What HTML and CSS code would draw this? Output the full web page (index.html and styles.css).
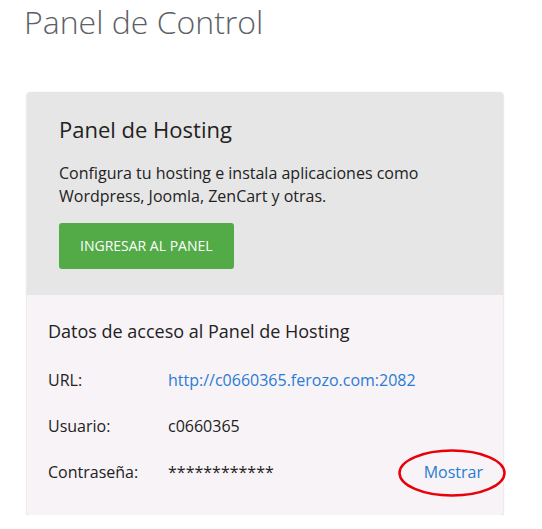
FILE: index.html
```html
<!DOCTYPE html>
<html lang="es">
<head>
    <meta charset="UTF-8">
    <title>Panel de Control</title>
    <link rel="stylesheet" href="styles.css">
</head>
<body>
    <h1 class="page-title">Panel de Control</h1>

    <div class="card">
        <div class="card-top">
            <h2>Panel de Hosting</h2>
            <p>Configura tu hosting e instala aplicaciones como Wordpress, Joomla, ZenCart y otras.</p>
            <a href="#" class="button">INGRESAR AL PANEL</a>
        </div>
        <div class="card-bottom">
            <h3>Datos de acceso al Panel de Hosting</h3>
            <div class="row">
                <span class="label">URL:</span>
                <a href="#" class="value link">http://c0660365.ferozo.com:2082</a>
            </div>
            <div class="row">
                <span class="label">Usuario:</span>
                <span class="value">c0660365</span>
            </div>
            <div class="row">
                <span class="label">Contraseña:</span>
                <span class="value">************</span>
                <a href="#" class="show link">
                    Mostrar
                    <svg class="circle" width="110" height="50" viewBox="0 0 110 50">
                        <ellipse cx="55" cy="25" rx="52.5" ry="22.5" fill="none" stroke="#e8000b" stroke-width="2.5"/>
                    </svg>
                </a>
            </div>
        </div>
    </div>
</body>
</html>
```

FILE: styles.css
```css
body {
    font-family: "Open Sans", "Liberation Sans", sans-serif;
    margin: 0;
    padding: 0 39px 0 27px;
    background: white;
    color: #222;
}
.page-title {
    font-weight: 300;
    font-size: 32px;
    line-height: 44px;
    color: #5d6068;
    margin: 0 0 48px -3px;
}
.card {
    border-radius: 3px;
    box-shadow: 0 1px 2px rgba(0,0,0,0.3);
}
.card-top {
    background: #e6e6e6;
    padding: 22px 32px 26px;
    border-radius: 3px 3px 0 0;
}
.card-top h2 {
    font-weight: 400;
    font-size: 22px;
    line-height: 30px;
    margin: 0 0 18px;
}
.card-top p {
    font-size: 16px;
    line-height: 23px;
    margin: 0 0 15px;
}
.button {
    display: inline-block;
    background: #52ab46;
    color: white;
    font-size: 14px;
    line-height: 46px;
    padding: 0 21px;
    border-radius: 3px;
    text-decoration: none;
    vertical-align: top;
}
.card-bottom {
    background: #f7f3f7;
    padding: 23px 20px 20px 21px;
    border-radius: 0 0 3px 3px;
}
.card-bottom h3 {
    font-weight: 400;
    font-size: 18px;
    line-height: 26px;
    margin: 0 0 13px;
}
.row {
    display: flex;
    align-items: center;
    font-size: 16px;
    line-height: 22px;
    padding: 12px 0;
}
.label {
    width: 120px;
}
.link {
    color: #2a7bd3;
    text-decoration: none;
}
.show {
    margin-left: auto;
    position: relative;
}
.circle {
    position: absolute;
    left: -27px;
    top: -13px;
}
```
